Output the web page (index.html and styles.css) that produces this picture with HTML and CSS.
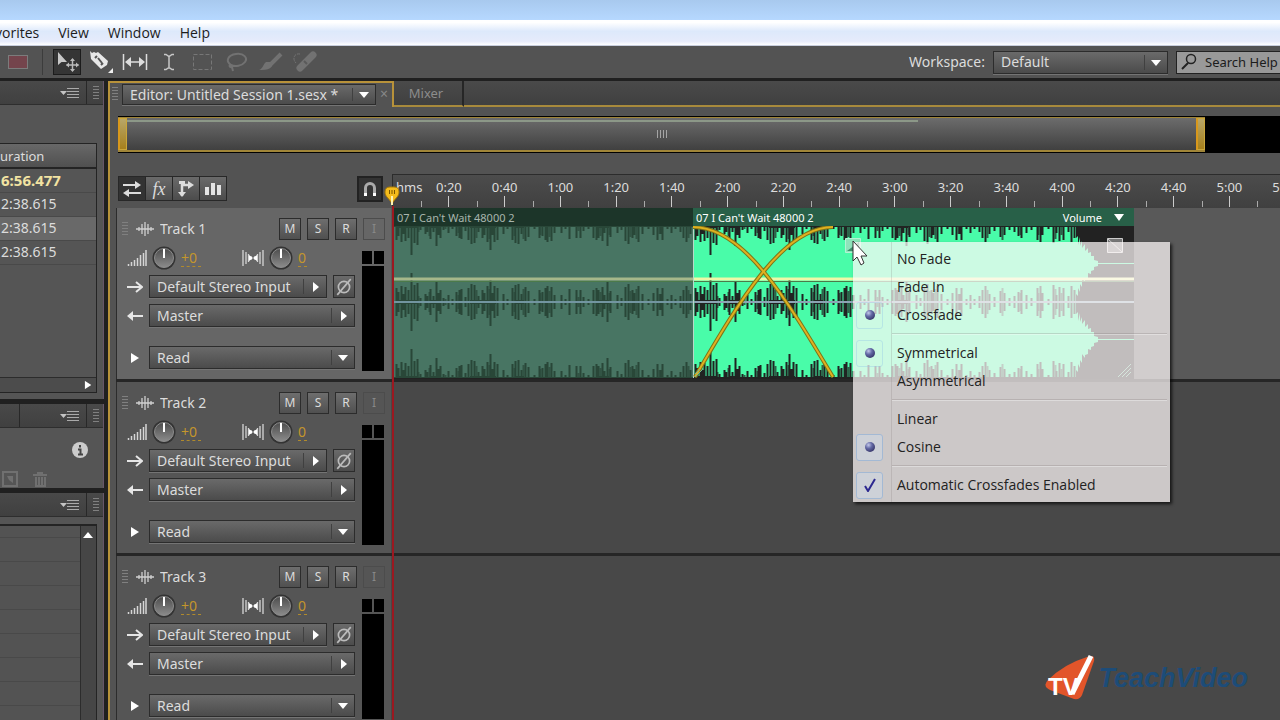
FILE: index.html
```
<!DOCTYPE html>
<html lang="en">
<head>
<meta charset="UTF-8">
<meta name="viewport" content="width=device-width" />
<title>Untitled Session 1.sesx</title>
<link rel="stylesheet" href="styles.css">
</head>

<body>

<!-- shared icons -->
<svg class="defs" width="0" height="0" aria-hidden="true">
	<symbol id="i-panel" viewBox="0 0 20 12"><path d="M0 4h7L3.500 8z" fill="#c4c4c4"/><path d="M7 1.500h12M7 4.500h12M7 7.500h12M7 10.500h12" stroke="#aaa"/></symbol>
	<symbol id="i-grip" viewBox="0 0 6 14"><path d="M0 .5h6M0 3.500h6M0 6.500h6M0 9.500h6M0 12.500h6" stroke="#808080"/></symbol>
	<symbol id="i-wave" viewBox="0 0 18 14"><path d="M0 7h18M3 5v4M6 2v10M9 0v14M12 2v10M15 5v4" stroke="#d0d0d0" stroke-width="1.300" fill="none"/></symbol>
	<symbol id="i-vol" viewBox="0 0 20 16"><path d="M1.500 14v2M4.500 12v4M7.500 10v6M10.500 8v8M13.500 5v11M16.500 3v13M19 0v16" stroke="#d6d6d6" stroke-width="1.500"/></symbol>
	<symbol id="i-pan" viewBox="0 0 22 16"><path d="M1 0v16M4 2v12M6.500 4v8M9 6v4M13 6v4M15.500 4v8M18 2v12M21 0v16" stroke="#d6d6d6" stroke-width="1.300"/><path d="M7 5l4 3-4 3zM15 5l-4 3 4 3z" fill="#fff"/></symbol>
	<symbol id="i-knob" viewBox="0 0 24 24"><circle cx="12" cy="12" r="11.500" fill="#333"/><circle cx="12" cy="12" r="9.500" fill="url(#knob)" stroke="#8c8c8c"/><path d="M12 3v9" stroke="#fff" stroke-width="2"/></symbol>
	<symbol id="i-in" viewBox="0 0 16 12"><path d="M0 6h15" stroke="#e6e6e6" stroke-width="2"/><path d="M9 1l6 5-6 5" fill="none" stroke="#e6e6e6" stroke-width="2"/></symbol>
	<symbol id="i-out" viewBox="0 0 16 12"><path d="M1 6h15" stroke="#e6e6e6" stroke-width="2"/><path d="M6 1L0 6l6 5z" fill="#e6e6e6"/></symbol>
	<symbol id="i-phase" viewBox="0 0 16 16"><circle cx="8" cy="8" r="5" fill="none" stroke="#bbb" stroke-width="1.500"/><path d="M2 15L14 1" stroke="#bbb" stroke-width="1.500"/></symbol>
	<symbol id="i-play" viewBox="0 0 8 12"><path d="M0 1v10l8-5z" fill="#fff"/></symbol>
	<linearGradient id="knob" x2="0" y2="1"><stop offset="0" stop-color="#4c4c4c"/><stop offset="1" stop-color="#8c8c8c"/></linearGradient>
	<radialGradient id="dot" cx=".35" cy=".3" r=".7"><stop offset="0" stop-color="#c3c8ea"/><stop offset=".5" stop-color="#6268a4"/><stop offset="1" stop-color="#3c3c70"/></radialGradient>
	<!-- quiet parts of one channel edge -->
	<g id="peaks">
		<path class="peak" d="M2.500 0v14M4.500 0v10M7.500 0v16M9.500 0v8M11.500 0v15M14.500 0v12M17.500 0v29M20.500 0v17M23.500 0v19M26.500 0v4M31.500 0v8M33.500 0v6M36.500 0v13M39.500 0v6M42.500 0v20M44.500 0v9M46.500 0v12M49.500 0v4M54.500 0v7M58.500 0v3M62.500 0v10M65.500 0v12M67.500 0v13M71.500 0v5M74.500 0v14M77.500 0v18M80.500 0v17M84.500 0v6M88.500 0v12M90.500 0v9M93.500 0v16M96.500 0v24M98.500 0v9M100.500 0v16M103.500 0v14M109.500 0v8M113.500 0v3M118.500 0v14M121.500 0v17M124.500 0v18M127.500 0v8M131.500 0v15M134.500 0v11M140.500 0v3M145.500 0v12M148.500 0v10M151.500 0v14M153.500 0v16M157.500 0v15M160.500 0v7M167.500 0v7M171.500 0v3M175.500 0v13M182.500 0v12M186.500 0v12M189.500 0v5M194.500 0v3M199.500 0v12M202.500 0v14M204.500 0v12M208.500 0v15M210.500 0v7M213.500 0v20M216.500 0v11M223.500 0v7M227.500 0v4M231.500 0v15M234.500 0v18M238.500 0v12M240.500 0v9M244.500 0v16M248.500 0v8M254.500 0v3M259.500 0v9M263.500 0v14M266.500 0v8M268.500 0v14M273.500 0v3M277.500 0v7M281.500 0v3M286.500 0v6M289.500 0v12M292.500 0v16M296.500 0v8M301.500 0v5M307.500 0v11M311.500 0v9M316.500 0v4M321.500 0v6M325.500 0v10M328.500 0v12M333.500 0v7M338.500 0v4M344.500 0v14M347.500 0v16M349.500 0v9M355.500 0v3M360.500 0v17M363.500 0v7M366.500 0v15M370.500 0v14M375.500 0v6M378.500 0v16M381.500 0v12"/>
		<path class="peak" d="M24.500 0v6M35.500 0v10M51.500 0v3M64.500 0v7M82.500 0v12M95.500 0v13M120.500 0v10M129.500 0v13M146.500 0v9M155.500 0v11M184.500 0v5M206.500 0v10M215.500 0v9M236.500 0v11M242.500 0v13M265.500 0v8M294.500 0v12M309.500 0v14M327.500 0v9M345.500 0v9M362.500 0v13M368.500 0v9" opacity=".7"/>
		<path d="M0 0h383v1H0zM2 0h22v2H2zM36 0h10v2H36zM76 0h26v2H76zM122 0h8v2h-8zM202 0h13v2h-13z" fill="currentColor"/>
	</g>
	<g id="channel">
		<path class="wave" d="M0 0h383v12l2-2v9l2-8v9l2-5v7l3-4v7l3-3v5l3-1v4l3 0v4l4 1v2h36v1h-36v2l-4 1v3l-3 1v3l-3-1v5l-3 1v3l-3-4v9l-2-3v8l-2-4v8l-2-2v9H0z"/>
		<use href="#peaks"/>
		<use href="#peaks" transform="matrix(1 0 0 -1 0 76)"/>
	</g>
</svg>

<!-- window top -->
<div class="titlebar"></div>
<nav class="menubar">
	<a href="#">vorites</a>
	<a href="#">View</a>
	<a href="#">Window</a>
	<a href="#">Help</a>
</nav>

<!-- toolbar -->
<div class="toolbar">
	<div class="tools">
		<button class="tool" aria-label="Spectral display"><svg width="22" height="16"><rect x="1.500" y="1.500" width="19" height="13" fill="#74444c" stroke="#7c7c7c"/></svg></button>
		<i class="split"></i>
		<button class="tool on" aria-label="Move"><svg width="24" height="22"><path d="M3 1v13l3.500-3H12z" fill="#c8c8c8"/><path d="M17.500 8v12M11.500 14h12" stroke="#bbb" stroke-width="1.500"/><path d="M15 10l2.500-3 2.500 3zM15 18l2.500 3 2.500-3zM14 11.500L11 14l3 2.500zM21 11.500l3 2.500-3 2.500z" fill="#bbb"/></svg></button>
		<button class="tool" aria-label="Razor"><svg width="26" height="24"><path d="M2 1l2 2 2-1 2 1 2-1 10 9-1 4-6 4L3 9z" fill="#e8e8e8"/><path d="M7 8l2-2M10 8l4 5M15 13l-2 2" stroke="#555" stroke-width="2"/><path d="M25 18v5h-5z" fill="#eee"/></svg></button>
		<button class="tool" aria-label="Slip"><svg width="26" height="16"><path d="M1.500 0v16M24.500 0v16M5 8h16" stroke="#ddd" stroke-width="1.500"/><path d="M9 3L3 8l6 5zM17 3l6 5-6 5z" fill="#ddd"/></svg></button>
		<button class="tool" aria-label="Time selection"><svg width="14" height="18"><path d="M2 1.500h2l3 2 3-2h2M2 16.500h2l3-2 3 2h2M7 3v12" fill="none" stroke="#c8c8c8" stroke-width="1.500"/></svg></button>
		<button class="tool" aria-label="Marquee selection"><svg width="22" height="18"><rect x="1.500" y="1.500" width="18" height="15" fill="none" stroke="#777" stroke-dasharray="4 2"/></svg></button>
		<button class="tool" aria-label="Lasso selection"><svg width="24" height="20"><path d="M6 13C0 9 3 3 11 2s12 4 9 8-10 5-14 3c-2-1-2 3 1 2l1 4" fill="none" stroke="#727272" stroke-width="2"/></svg></button>
		<button class="tool" aria-label="Paintbrush"><svg width="24" height="20"><path d="M22 2L12 12" stroke="#727272" stroke-width="4"/><path d="M12 10c4 3 0 9-12 8 4-1 4-6 7-8z" fill="#727272"/></svg></button>
		<button class="tool" aria-label="Spot healing"><svg width="28" height="22"><path d="M22 4L9 17" stroke="#727272" stroke-width="7" stroke-linecap="round"/><path d="M9 3C3 2 1 8 5 12" fill="none" stroke="#727272" stroke-dasharray="3 1"/><path d="M13 10l3 3" stroke="#5a5a5a" stroke-width="2"/></svg></button>
	</div>
	<div class="workspace">
		<label for="workspace">Workspace:</label>
		<span class="pick down"><select id="workspace"><option>Default</option></select></span>
		<span class="search">
			<svg width="16" height="18"><circle cx="10" cy="6" r="4.500" fill="none" stroke="#222" stroke-width="1.500"/><path d="M7 10l-6 6" stroke="#222" stroke-width="2"/></svg>
			<input type="text" value="Search Help" aria-label="Search Help">
		</span>
	</div>
</div>

<div class="main">

	<!-- left panels -->
	<div class="side">
		<section class="panel files">
			<header class="panel-tabs"><svg width="20" height="12"><use href="#i-panel"/></svg><i></i><svg width="6" height="14"><use href="#i-grip"/></svg></header>
			<div class="file-list">
				<table>
					<tr><th>uration</th></tr>
					<tr class="session"><td>6:56.477</td></tr>
					<tr><td>2:38.615</td></tr>
					<tr class="selected"><td>2:38.615</td></tr>
					<tr><td>2:38.615</td></tr>
				</table>
				<div class="scroll-h"><svg width="8" height="10" viewBox="0 0 8 12"><use href="#i-play"/></svg></div>
			</div>
		</section>

		<section class="panel media">
			<header class="panel-tabs"><b></b><svg width="20" height="12"><use href="#i-panel"/></svg><i></i><svg width="6" height="14"><use href="#i-grip"/></svg></header>
			<div class="media-body">
				<button aria-label="Info"><svg width="16" height="16"><circle cx="8" cy="8" r="8" fill="#ccc"/><path d="M8 3v2.500M6 7.500h2.500v5M6 12.500h5" stroke="#444" stroke-width="2" fill="none"/></svg></button>
				<div class="media-tools">
					<svg width="16" height="16"><rect x="1" y="1" width="14" height="14" fill="none" stroke="#707070" stroke-width="2"/><path d="M5 5h6v7L7 9z" fill="#707070"/></svg>
					<svg width="14" height="16"><path d="M0 4h14M4 2h6M3 6v10M6 6v10M9 6v10M12 6v10M2 15h11" stroke="#707070" stroke-width="2"/></svg>
				</div>
			</div>
		</section>

		<section class="panel history">
			<header class="panel-tabs"><svg width="20" height="12"><use href="#i-panel"/></svg><i></i><svg width="6" height="14"><use href="#i-grip"/></svg></header>
			<div class="history-list">
				<div class="lines"></div>
				<div class="scroll-v"><svg width="10" height="6"><path d="M0 6h10L5 0z" fill="#fff"/></svg></div>
			</div>
		</section>
	</div>

	<!-- editor -->
	<div class="editor">
		<div class="tabs">
			<div class="tab-open">
				<svg width="6" height="14"><use href="#i-grip"/></svg>
				<span class="pick down"><select aria-label="Open session"><option>Editor: Untitled Session 1.sesx *</option></select></span>
				<button class="close" aria-label="Close">×</button>
			</div>
			<button class="tab">Mixer</button>
			<div class="tab-rest"></div>
		</div>

		<div class="overview">
			<div class="range">
				<i class="handle"></i>
				<div class="range-body"><svg width="10" height="8"><path d="M.5 0v8M3.500 0v8M6.500 0v8M9.500 0v8" stroke="#a5a5a5"/></svg></div>
				<i class="handle"></i>
			</div>
		</div>

		<div class="timebar">
			<div class="modes">
				<button class="on" aria-label="Inputs and outputs"><svg width="20" height="16"><path d="M1 4h14M5 12h14" stroke="#ddd" stroke-width="2"/><path d="M13 0l6 4-6 4zM7 8l-6 4 6 4z" fill="#ddd"/></svg></button>
				<button class="fx">fx</button>
				<button aria-label="Sends"><svg width="16" height="18"><path d="M4 1v15M4 5h8" stroke="#ddd" stroke-width="2.500"/><path d="M10 1l6 4-6 4zM0 12h8l-4 5zM1 1h6v3H1z" fill="#ddd"/></svg></button>
				<button aria-label="EQ"><svg width="16" height="14"><path d="M0 5h4v8H0zM6 1h4v12H6zM12 3h4v10h-4z" fill="#e4e4e4"/></svg></button>
			</div>
			<button class="magnet" aria-label="Snapping"><svg width="16" height="16"><path d="M3.500 15V7a4.500 4.500 0 0 1 9 0v8" fill="none" stroke="#aaa" stroke-width="3"/><path d="M2 12h3v3H2zM11 12h3v3h-3z" fill="#fff"/></svg></button>
			<div class="ruler">
				<span class="unit">hms</span>
				<ol>
					<li>0:20</li><li>0:40</li><li>1:00</li><li>1:20</li><li>1:40</li><li>2:00</li><li>2:20</li><li>2:40</li>
					<li>3:00</li><li>3:20</li><li>3:40</li><li>4:00</li><li>4:20</li><li>4:40</li><li>5:00</li><li>5:20</li>
				</ol>
			</div>
		</div>

		<div class="tracks">

			<div class="track active">
				<div class="head">
					<div class="row name-row">
						<svg width="6" height="14"><use href="#i-grip"/></svg>
						<svg width="18" height="14"><use href="#i-wave"/></svg>
						<input class="name" type="text" value="Track 1" aria-label="Track name">
						<button>M</button><button>S</button><button>R</button><button disabled>I</button>
					</div>
					<div class="controls">
						<div class="row knobs">
							<svg width="20" height="16"><use href="#i-vol"/></svg><svg width="24" height="24"><use href="#i-knob"/></svg>
							<input type="text" value="+0" aria-label="Volume">
							<svg class="pan" width="22" height="16"><use href="#i-pan"/></svg><svg width="24" height="24"><use href="#i-knob"/></svg>
							<input class="short" type="text" value="0" aria-label="Pan">
						</div>
						<div class="row route">
							<svg width="16" height="12"><use href="#i-in"/></svg>
							<span class="pick"><select aria-label="Input"><option>Default Stereo Input</option></select></span>
							<button class="phase" aria-label="Polarity"><svg width="18" height="18"><use href="#i-phase"/></svg></button>
						</div>
						<div class="row route">
							<svg width="16" height="12"><use href="#i-out"/></svg>
							<span class="pick"><select aria-label="Output"><option>Master</option></select></span>
						</div>
						<div class="row route automation">
							<button class="twirl" aria-label="Show envelopes"><svg width="8" height="12"><use href="#i-play"/></svg></button>
							<span class="pick down"><select aria-label="Automation"><option>Read</option></select></span>
						</div>
					</div>
					<div class="meter"><i></i><i></i><b></b></div>
				</div>
				<div class="lane">
					<div class="clip muted">
						<div class="clip-name">07 I Can't Wait 48000 2</div>
						<svg width="299" height="152">
							<use href="#channel"/><use href="#channel" y="76"/>
							<path class="volume" d="M0 53h299"/><path class="shade" d="M0 55.500h299"/><path class="panline" d="M0 76h299"/>
						</svg>
					</div>
					<div class="clip">
						<div class="clip-name">07 I Can't Wait 48000 2<button>Volume <svg width="10" height="7"><path d="M0 0h10L5 7z" fill="#fff"/></svg></button></div>
						<svg width="441" height="152">
							<use href="#channel"/><use href="#channel" y="76"/>
							<path class="volume" d="M0 53h441"/><path class="shade" d="M0 55.500h441"/><path class="panline" d="M0 76h441"/>
							<path d="M.5 0v152" stroke="#b9d8c8"/>
							<path class="fade-edge" d="M0 1C51 1 94 74 140 151M2 151C47 74 90 1 140 1"/>
							<path class="fade" d="M0 1C51 1 94 74 140 151M2 151C47 74 90 1 140 1"/>
							<path d="M152.500 12.500h15v14h-15z" fill="#8fe3bb" stroke="#b4f4d4"/><path d="M154 25l12-9v9z" fill="#3f8d6b"/>
							<path d="M414.500 12.500h15v14h-15zM415 13l14 13" fill="#777" stroke="#ccc"/>
							<path d="M2 148l5-5M2 151l8-8M429 151l9-9M433 151l5-5M425 151l13-13" stroke="#6fb595"/>
						</svg>
					</div>
				</div>
			</div>

			<div class="track">
				<div class="head">
					<div class="row name-row">
						<svg width="6" height="14"><use href="#i-grip"/></svg>
						<svg width="18" height="14"><use href="#i-wave"/></svg>
						<input class="name" type="text" value="Track 2" aria-label="Track name">
						<button>M</button><button>S</button><button>R</button><button disabled>I</button>
					</div>
					<div class="controls">
						<div class="row knobs">
							<svg width="20" height="16"><use href="#i-vol"/></svg><svg width="24" height="24"><use href="#i-knob"/></svg>
							<input type="text" value="+0" aria-label="Volume">
							<svg class="pan" width="22" height="16"><use href="#i-pan"/></svg><svg width="24" height="24"><use href="#i-knob"/></svg>
							<input class="short" type="text" value="0" aria-label="Pan">
						</div>
						<div class="row route">
							<svg width="16" height="12"><use href="#i-in"/></svg>
							<span class="pick"><select aria-label="Input"><option>Default Stereo Input</option></select></span>
							<button class="phase" aria-label="Polarity"><svg width="18" height="18"><use href="#i-phase"/></svg></button>
						</div>
						<div class="row route">
							<svg width="16" height="12"><use href="#i-out"/></svg>
							<span class="pick"><select aria-label="Output"><option>Master</option></select></span>
						</div>
						<div class="row route automation">
							<button class="twirl" aria-label="Show envelopes"><svg width="8" height="12"><use href="#i-play"/></svg></button>
							<span class="pick down"><select aria-label="Automation"><option>Read</option></select></span>
						</div>
					</div>
					<div class="meter"><i></i><i></i><b></b></div>
				</div>
				<div class="lane"></div>
			</div>

			<div class="track">
				<div class="head">
					<div class="row name-row">
						<svg width="6" height="14"><use href="#i-grip"/></svg>
						<svg width="18" height="14"><use href="#i-wave"/></svg>
						<input class="name" type="text" value="Track 3" aria-label="Track name">
						<button>M</button><button>S</button><button>R</button><button disabled>I</button>
					</div>
					<div class="controls">
						<div class="row knobs">
							<svg width="20" height="16"><use href="#i-vol"/></svg><svg width="24" height="24"><use href="#i-knob"/></svg>
							<input type="text" value="+0" aria-label="Volume">
							<svg class="pan" width="22" height="16"><use href="#i-pan"/></svg><svg width="24" height="24"><use href="#i-knob"/></svg>
							<input class="short" type="text" value="0" aria-label="Pan">
						</div>
						<div class="row route">
							<svg width="16" height="12"><use href="#i-in"/></svg>
							<span class="pick"><select aria-label="Input"><option>Default Stereo Input</option></select></span>
							<button class="phase" aria-label="Polarity"><svg width="18" height="18"><use href="#i-phase"/></svg></button>
						</div>
						<div class="row route">
							<svg width="16" height="12"><use href="#i-out"/></svg>
							<span class="pick"><select aria-label="Output"><option>Master</option></select></span>
						</div>
						<div class="row route automation">
							<button class="twirl" aria-label="Show envelopes"><svg width="8" height="12"><use href="#i-play"/></svg></button>
							<span class="pick down"><select aria-label="Automation"><option>Read</option></select></span>
						</div>
					</div>
					<div class="meter"><i></i><i></i><b></b></div>
				</div>
				<div class="lane"></div>
			</div>

			<!-- playhead -->
			<div class="playhead"><svg width="16" height="20"><path d="M1 6q0-5 5-5h4q5 0 5 5c0 5-5 7-7 12C6 13 1 11 1 6z" fill="#f4bc1c" stroke="#a87a08"/><path d="M5.500 4v4M8 4v4M10.500 4v4" stroke="#7a5600"/><path d="M8 10v9" stroke="#fff3b0" stroke-width="2"/></svg></div>

			<!-- fade menu -->
			<div class="menu" role="menu">
				<button role="menuitem"><i></i>No Fade</button>
				<button role="menuitem"><i></i>Fade In</button>
				<button role="menuitem"><i class="faint"><svg width="12" height="12"><circle cx="6" cy="6" r="5" fill="url(#dot)"/></svg></i>Crossfade</button>
				<hr>
				<button role="menuitem"><i class="faint"><svg width="12" height="12"><circle cx="6" cy="6" r="5" fill="url(#dot)"/></svg></i>Symmetrical</button>
				<button role="menuitem"><i></i>Asymmetrical</button>
				<hr>
				<button role="menuitem"><i></i>Linear</button>
				<button role="menuitem"><i class="set"><svg width="12" height="12"><circle cx="6" cy="6" r="5" fill="url(#dot)"/></svg></i>Cosine</button>
				<hr>
				<button role="menuitem"><i class="set"><svg width="14" height="14"><path d="M2 8l3 5 7-12" fill="none" stroke="#2c2890" stroke-width="2"/></svg></i>Automatic Crossfades Enabled</button>
			</div>
			<svg class="cursor" width="16" height="26"><path d="M1 1v20l4-4 4 8 3-2-3-7h6z" fill="#fff" stroke="#333"/></svg>
		</div>
	</div>
</div>

<!-- watermark -->
<div class="brand">
	<svg width="52" height="48"><path d="M47 2q4 0 3 5L38 41q-2 5-8 4L6 36q-8-4-2-10Q20 10 43 3z" fill="#e2552a"/><path d="M28 40L47 2" stroke="#fff" stroke-width="5"/><text class="brand-mark" x="4" y="41">TV</text></svg>
	<span>TeachVideo</span>
</div>

</body>
</html>
```
FILE: styles.css
```
/* -------------------------------------
		GLOBAL
------------------------------------- */
* {
	box-sizing: border-box;
	margin: 0;
	padding: 0;
}

body {
	display: flex;
	flex-direction: column;
	height: 100vh;
	overflow: hidden;
	background: #202020;
	color: #dcdcdc;
	font-family: "Noto Sans", "Open Sans", sans-serif;
	font-size: 14px;
	line-height: 20px;
}

button, select, input {
	border: 0;
	background: none;
	color: inherit;
	font: inherit;
	min-width: 0;
}

svg {
	display: block;
	flex: none;
}

a {
	color: #1c1c1c;
	text-decoration: none;
}

.defs {
	position: absolute;
}

/* drop-down look */
.pick {
	position: relative;
	display: flex;
	height: 23px;
	border: 1px solid #2c2c2c;
	background: linear-gradient(#6a6a6a, #4b4b4b);
	box-shadow: 0 1px 0 #747474;
}

.pick select {
	flex: 1;
	appearance: none;
	padding: 0 24px 0 7px;
}

.pick::before {
	content: "";
	position: absolute;
	top: 3px;
	bottom: 3px;
	right: 22px;
	border-left: 1px solid #404040;
}

.pick::after {
	content: "";
	position: absolute;
	top: 6px;
	right: 7px;
	border: 5px solid transparent;
	border-left: 6px solid #fff;
	border-right: 0;
	pointer-events: none;
}

.pick.down::after {
	top: 8px;
	right: 6px;
	border: 5px solid transparent;
	border-top: 6px solid #fff;
	border-bottom: 0;
}

/* -------------------------------------
		WINDOW TOP
------------------------------------- */
.titlebar {
	flex: none;
	height: 20px;
	background: linear-gradient(#a8c9ee, #b6d8ff);
}

.menubar {
	flex: none;
	display: flex;
	align-items: center;
	gap: 19px;
	height: 26px;
	background: linear-gradient(#fff 10%, #dde9fb 45%, #e6ebfb 85%, #fff);
	font-family: "Open Sans", sans-serif;
	border-bottom: 1px solid #c8cede;
}

.menubar a:first-child {
	margin-left: -5px;
}

.toolbar {
	flex: none;
	display: flex;
	justify-content: space-between;
	align-items: center;
	height: 35px;
	background: #535353;
	border-bottom: 3px solid #202020;
}

.tools {
	display: flex;
	align-items: center;
	gap: 6px;
	padding-left: 4px;
}

.tool {
	display: flex;
	align-items: center;
	justify-content: center;
	width: 28px;
	height: 26px;
}

.tool.on {
	background: #353535;
	border: 1px solid #1c1c1c;
}

.split {
	height: 26px;
	margin: 0 4px;
	border-left: 1px solid #3c3c3c;
}

.workspace {
	display: flex;
	align-items: center;
	gap: 8px;
}

.workspace .pick {
	width: 175px;
}

.search {
	display: flex;
	align-items: center;
	gap: 8px;
	width: 104px;
	height: 23px;
	padding-left: 4px;
	border: 1px solid #222;
	border-right: 0;
	background: #999;
	color: #1c1c1c;
	font-size: 13px;
}

.search input {
	flex: 1;
}

.main {
	flex: 1;
	display: flex;
	min-height: 0;
}

/* -------------------------------------
		LEFT PANELS
------------------------------------- */
.side {
	flex: none;
	display: flex;
	flex-direction: column;
	gap: 5px;
	width: 108px;
	padding-right: 4px;
}

.panel {
	background: #555;
	border-right: 1px solid #67566a;
}

.panel-tabs {
	display: flex;
	align-items: center;
	justify-content: flex-end;
	gap: 6px;
	height: 24px;
	padding-right: 4px;
	background: linear-gradient(#494949, #404040);
	border-bottom: 1px solid #2e2e2e;
}

.panel-tabs i, .panel-tabs b {
	align-self: stretch;
	border-left: 1px solid #282828;
}

.panel-tabs b {
	margin-right: 34px;
}

.files {
	height: 318px;
	padding-right: 6px;
}

.files .panel-tabs, .history .panel-tabs {
	margin-right: -6px;
}

.file-list {
	display: flex;
	flex-direction: column;
	height: 250px;
	margin-top: 38px;
	border: 1px solid #242424;
	border-left: 0;
}

.file-list table {
	width: 100%;
	border-collapse: collapse;
	text-align: left;
}

.file-list th {
	height: 24px;
	background: linear-gradient(#686868, #505050);
	border-bottom: 2px solid #242424;
	font-weight: normal;
	font-size: 13px;
}

.file-list td {
	height: 24px;
	padding-left: 1px;
	border-bottom: 1px solid #494949;
}

.file-list .session td {
	color: #f2e3a2;
	font-size: 15px;
	font-weight: bold;
}

.selected {
	background: #696969;
}

.scroll-h {
	display: flex;
	align-items: center;
	justify-content: flex-end;
	height: 15px;
	margin-top: auto;
	padding-right: 4px;
	border-top: 1px solid #2c2c2c;
	background: #4c4c4c;
}

.media {
	height: 84px;
}

.media-body {
	display: flex;
	flex-direction: column;
	align-items: flex-end;
	gap: 13px;
	padding: 14px 15px 0 0;
}

.media-body button {
	height: 16px;
}

.media-tools {
	display: flex;
	gap: 15px;
	width: 86px;
}

.history {
	flex: 1;
	display: flex;
	flex-direction: column;
	padding-right: 6px;
}

.history-list {
	flex: 1;
	display: flex;
	margin-top: 7px;
	border: 1px solid #242424;
	border-width: 2px 1px 0 0;
}

.lines {
	flex: 1;
	background: repeating-linear-gradient(#535353 0 11px, #494949 11px 12px, #535353 12px 24px);
}

.scroll-v {
	width: 16px;
	padding: 6px 2px;
	border-left: 1px solid #2c2c2c;
	background: #464646;
}

/* -------------------------------------
		EDITOR
------------------------------------- */
.editor {
	flex: 1;
	display: flex;
	flex-direction: column;
	min-width: 0;
	border-left: 2px solid #b8923a;
	background: #535353;
}

.tabs {
	flex: none;
	display: flex;
	height: 26px;
}

.tab-open {
	display: flex;
	align-items: center;
	gap: 4px;
	width: 284px;
	padding: 0 0 2px 2px;
	border: 2px solid #b8923a;
	border-width: 2px 2px 0 0;
}

.tab-open .pick {
	width: 254px;
	height: 21px;
}

.tab-open .pick::after {
	top: 7px;
}

.close {
	color: #888;
}

.tab, .tab-rest {
	background: linear-gradient(#4a4a4a, #404040);
	border-bottom: 2px solid #a88a3c;
}

.tab {
	width: 70px;
	padding-right: 4px;
	border-right: 2px solid #262626;
	color: #8c8c8c;
	font-size: 13px;
}

.tab-rest {
	flex: 1;
}

.overview {
	flex: none;
	display: flex;
	height: 37px;
	margin: 9px 0 0 8px;
	padding: 1px 0;
	background: #000;
}

.range {
	flex: 0 1 1087px;
	display: flex;
	margin-right: 75px;
	border: 1px solid #a08538;
	border-width: 1px 0 2px;
}

.handle {
	width: 9px;
	border: 1px solid #caa63a;
	border-left: 2px solid #d8981c;
	background: linear-gradient(#b8a668, #a6801c);
}

.range-body {
	flex: 1;
	display: flex;
	align-items: center;
	justify-content: center;
	background: linear-gradient(90deg, #8c9888 74%, transparent 74%) 0 2px / 100% 2px no-repeat, linear-gradient(#6c6c6c, #404040);
}

.timebar {
	flex: none;
	display: flex;
	height: 34px;
	margin-top: 21px;
	padding-left: 8px;
}

.modes {
	display: flex;
	height: 25px;
	margin-top: 2px;
	border: 1px solid #282828;
}

.modes button, .magnet {
	display: flex;
	align-items: center;
	justify-content: center;
	width: 27px;
	border-right: 1px solid #282828;
	background: linear-gradient(#6a6a6a, #4c4c4c);
}

.modes button:last-child {
	width: 26px;
	border-right: 0;
}

.modes .on, .magnet {
	background: #333;
}

.modes .fx {
	font-family: "Liberation Serif", serif;
	font-style: italic;
	font-size: 18px;
}

.magnet {
	width: 26px;
	height: 26px;
	margin: 2px 9px 0 auto;
	border: 2px solid #222;
}

.ruler {
	/* time starts where the track heads end */
	flex: 0 0 calc(100% - 274px);
	display: flex;
	overflow: hidden;
	border-top: 1px solid #2c2c2c;
	border-left: 1px solid #2c2c2c;
	background: linear-gradient(#4c4c4c, #404040);
	font-size: 13px;
	line-height: 24px;
}

.unit {
	width: 28px;
	padding-left: 3px;
}

.ruler ol {
	flex: 1;
	display: grid;
	grid-template-columns: repeat(16, 1fr);
	margin-right: -33px;
	list-style: none;
}

.ruler li {
	text-align: center;
	background:
		linear-gradient(#ccc, #ccc) center bottom / 1px 11px no-repeat,
		linear-gradient(#aaa, #aaa) left bottom / 1px 6px no-repeat;
	margin-bottom: 1px;
}

/* -------------------------------------
		TRACKS
------------------------------------- */
.tracks {
	position: relative;
	flex: 1;
	min-height: 0;
	margin-left: 6px;
}

.track {
	display: flex;
	height: 174px;
	border-bottom: 3px solid #262626;
}

.head {
	flex: none;
	display: grid;
	grid-template-columns: 1fr 24px;
	grid-template-rows: 39px 1fr;
	width: 275px;
	padding-right: 5px;
	border-left: 1px solid #2c2c2c;
	background: #555;
}

.active .head {
	background: #666;
}

.row {
	display: flex;
	align-items: center;
}

.name-row {
	grid-column: 1 / 3;
	gap: 6px;
	padding: 3px 1px 0 5px;
}

.name-row svg:nth-child(2) {
	margin-left: 2px;
}

.name {
	flex: 1;
}

.name-row button {
	width: 22px;
	height: 22px;
	border: 1px solid #2c2c2c;
	background: linear-gradient(#6e6e6e, #505050);
	font-size: 12px;
	line-height: 18px;
}

.name-row button:disabled {
	background: none;
	border-color: #4c4c4c;
	color: #888;
}

.controls {
	display: flex;
	flex-direction: column;
	gap: 6px;
	padding: 0 7px 0 10px;
}

.knobs {
	gap: 5px;
	height: 22px;
}

.knobs input {
	width: 20px;
	height: 17px;
	border-bottom: 1px dashed #b08a2c;
	color: #c4962c;
}

.knobs input.short {
	width: 9px;
}

.pan {
	margin-left: 36px;
}

.route {
	gap: 6px;
}

.route .pick {
	flex: 1;
}

.automation {
	margin-top: 13px;
}

.twirl {
	width: 16px;
	padding-left: 4px;
}

.phase {
	display: flex;
	align-items: center;
	justify-content: center;
	width: 22px;
	height: 23px;
	border: 1px solid #2c2c2c;
	background: linear-gradient(#6a6a6a, #4c4c4c);
}

.meter {
	display: grid;
	grid-template: 13px 105px / 1fr 1fr;
	gap: 2px;
	width: 22px;
	margin-top: 4px;
}

.meter i, .meter b {
	background: #000;
}

.meter b {
	grid-column: 1 / 3;
}

.lane {
	flex: 1;
	display: flex;
	min-width: 0;
	padding-left: 3px;
	background: #484848;
}

.active .lane {
	background: #595959;
}

.clip {
	--wave: #49fca9;
	flex: none;
	color: #202422;
	background: #222;
}

.clip.muted {
	--wave: #487563;
	color: #294738;
}

.clip-name {
	display: flex;
	justify-content: space-between;
	height: 18px;
	padding: 0 10px 0 3px;
	background: #286048;
	color: #fff;
	font-size: 11px;
	line-height: 19px;
}

.clip-name button {
	display: flex;
	align-items: center;
	gap: 12px;
}

.muted .clip-name {
	background: #1c3529;
	color: #a9b5ae;
}

.wave {
	fill: var(--wave);
}

.peak {
	stroke: currentColor;
	stroke-width: 2;
}

.volume {
	stroke: #eef8a8;
	stroke-width: 3;
}

.shade {
	stroke: #4c7a4a;
}

.panline {
	stroke: #8ca4b4;
	stroke-width: 2;
}

.muted .volume {
	stroke: #a6b88a;
}

.muted .panline {
	stroke: #7295a0;
}

.fade, .fade-edge {
	fill: none;
	stroke: #e0b020;
	stroke-width: 2;
}

.fade-edge {
	stroke: #7c7418;
	stroke-width: 4;
}

/* -------------------------------------
		OVERLAYS
------------------------------------- */
.playhead {
	position: absolute;
	top: -22px;
	bottom: 0;
	left: 268px;
	width: 16px;
	background: linear-gradient(#9c1820, #9c1820) 8px 20px / 2px 100% no-repeat;
}

.menu {
	position: absolute;
	top: 34px;
	left: 737px;
	width: 317px;
	padding: 3px;
	background: linear-gradient(rgba(120, 110, 110, .2), rgba(120, 110, 110, .2)) 38px 0 / 1px 100% no-repeat, rgba(255, 249, 249, .72);
	box-shadow: 2px 2px 3px rgba(0, 0, 0, .7);
	color: #222;
	font-family: "Open Sans", sans-serif;
}

.menu button {
	display: flex;
	align-items: center;
	gap: 14px;
	width: 100%;
	height: 28px;
}

.menu i {
	display: flex;
	align-items: center;
	justify-content: center;
	width: 27px;
	height: 27px;
}

.menu i.set {
	border: 1px solid #a3b9d4;
	border-radius: 3px;
	background: rgba(205, 218, 232, .5);
}

.menu i.faint {
	border: 1px solid rgba(150, 200, 230, .4);
	border-radius: 3px;
}

.menu hr {
	height: 2px;
	margin: 4px 0 4px 36px;
	border: 0;
	border-top: 1px solid rgba(120, 110, 110, .25);
	border-bottom: 1px solid rgba(255, 255, 255, .35);
}

.cursor {
	position: absolute;
	top: 32px;
	left: 736px;
}

.brand {
	position: absolute;
	right: 32px;
	bottom: 18px;
	display: flex;
	align-items: center;
	gap: 2px;
	color: #1d4c78;
	font: italic bold 27px/48px "Liberation Sans", sans-serif;
}

.brand-mark {
	fill: #fff;
	font-size: 24px;
	font-style: normal;
}
```
